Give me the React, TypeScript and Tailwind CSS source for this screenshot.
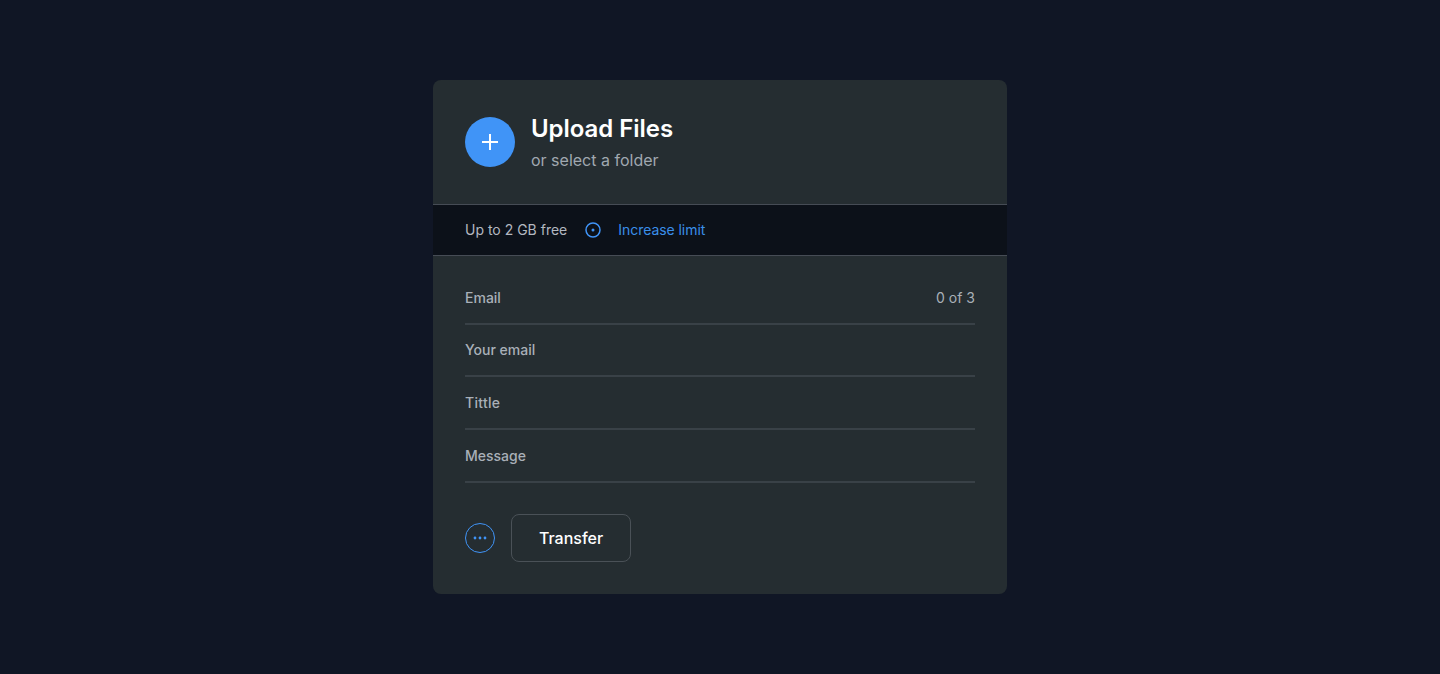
type Field = { label: string; note?: string; className: string; labelClassName: string };

const fields: Field[] = [
  { label: 'Email', note: '0 of 3', className: 'h-[53px] pt-[1px]', labelClassName: 'font-medium' },
  { label: 'Your email', className: 'h-[52px]', labelClassName: 'font-medium' },
  { label: 'Tittle', className: 'h-[53px]', labelClassName: 'font-medium tracking-[0.3px]' },
  { label: 'Message', className: 'h-[53px]', labelClassName: 'font-medium' },
];

export default function App() {
  return (
    <main className="flex h-[674px] justify-center bg-[#101625] pt-20 font-[Inter,sans-serif]">
      <section className="flex h-[514px] w-[574px] flex-col overflow-hidden rounded-lg bg-[#252d31]">
        <header className="flex h-[124px] items-center gap-4 px-8">
          <button className="flex size-[50px] items-center justify-center rounded-full bg-[#4094f7]">
            <svg width="24" height="24" viewBox="0 0 24 24" fill="none" stroke="#ffffff" strokeWidth="2">
              <path d="M12 4v16M4 12h16" />
            </svg>
          </button>
          <div className="pt-[5px]">
            <h1 className="text-2xl leading-8 font-semibold tracking-[-0.05px] text-white">Upload Files</h1>
            <p className="text-base leading-[31px] text-[#a0a8b0]">or select a folder</p>
          </div>
        </header>

        <div className="flex h-[52px] items-center border-y border-[#464c55] bg-[#0c1119] px-8 text-sm">
          <span className="text-[#b3b8c0]">Up to 2 GB free</span>
          <svg className="mr-4 ml-[17px]" width="18" height="18" viewBox="0 0 18 18" fill="none">
            <circle cx="9" cy="9" r="7" stroke="#4094f7" strokeWidth="1.5" />
            <circle cx="9" cy="9" r="1.5" fill="#4094f7" />
          </svg>
          <a className="tracking-[-0.05px] text-[#3a8fe9]">Increase limit</a>
        </div>

        <form className="px-8 pt-4">
          {fields.map((field) => (
            <div
              key={field.label}
              className={`flex items-center justify-between border-b-2 border-[#394147] text-sm text-[#a9b0b8] ${field.className}`}
            >
              <label className={field.labelClassName}>{field.label}</label>
              {field.note && <span>{field.note}</span>}
            </div>
          ))}
        </form>

        <footer className="mt-[31px] flex items-center gap-4 px-8">
          <button className="flex size-[30px] items-center justify-center rounded-full border border-[#4094f7]">
            <svg width="14" height="4" viewBox="0 0 14 4" fill="#4094f7">
              <circle cx="2" cy="2" r="1.4" />
              <circle cx="7" cy="2" r="1.4" />
              <circle cx="12" cy="2" r="1.4" />
            </svg>
          </button>
          <button className="h-12 w-[120px] rounded-lg border border-[#4a5157] text-base font-medium text-white">
            Transfer
          </button>
        </footer>
      </section>
    </main>
  );
}
